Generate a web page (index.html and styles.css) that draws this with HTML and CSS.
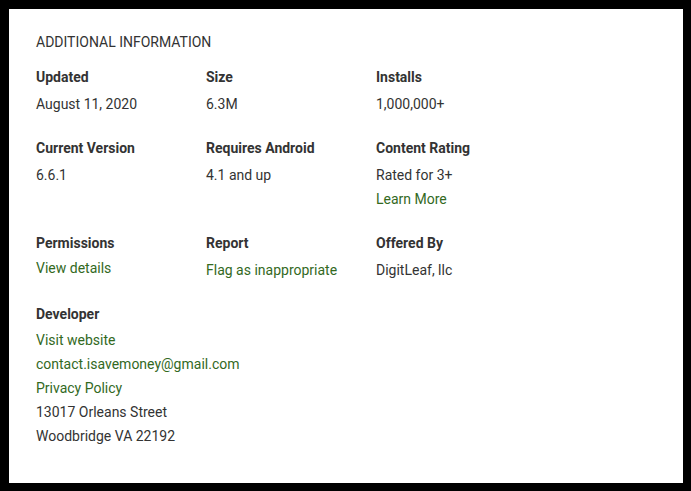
FILE: index.html
```html
<!DOCTYPE html>
<html lang="en">
<head>
  <meta charset="UTF-8">
  <meta name="viewport" content="width=device-width, initial-scale=1.0">
  <title>Additional Information</title>
  <link rel="stylesheet" href="styles.css">
</head>
<body>
  <div class="frame">
    <div class="info-card">
      <div class="info-title">ADDITIONAL INFORMATION</div>
      <div class="info-grid">
        <div class="info-item">
          <div class="info-label">Updated</div>
          <div class="info-value">August 11, 2020</div>
        </div>
        <div class="info-item">
          <div class="info-label">Size</div>
          <div class="info-value">6.3M</div>
        </div>
        <div class="info-item">
          <div class="info-label">Installs</div>
          <div class="info-value">1,000,000+</div>
        </div>

        <div class="info-item">
          <div class="info-label">Current Version</div>
          <div class="info-value">6.6.1</div>
        </div>
        <div class="info-item">
          <div class="info-label">Requires Android</div>
          <div class="info-value">4.1 and up</div>
        </div>
        <div class="info-item">
          <div class="info-label">Content Rating</div>
          <div class="info-value">Rated for 3+</div>
          <div><a class="info-link" href="#">Learn More</a></div>
        </div>

        <div class="info-item">
          <div class="info-label">Permissions</div>
          <div class="info-value tight"><a class="info-link" href="#">View details</a></div>
        </div>
        <div class="info-item">
          <div class="info-label">Report</div>
          <div class="info-value"><a class="info-link" href="#">Flag as inappropriate</a></div>
        </div>
        <div class="info-item">
          <div class="info-label">Offered By</div>
          <div class="info-value">DigitLeaf, llc</div>
        </div>

        <div class="info-item wide">
          <div class="info-label">Developer</div>
          <div class="dev-lines">
            <a class="info-link" href="#">Visit website</a>
            <a class="info-link" href="#">contact.isavemoney@gmail.com</a>
            <a class="info-link" href="#">Privacy Policy</a>
            <span>13017 Orleans Street</span>
            <span>Woodbridge VA 22192</span>
          </div>
        </div>
      </div>
    </div>
  </div>
</body>
</html>
```

FILE: styles.css
```css
body { margin: 0; padding: 0; background: #000; font-family: Roboto, Arial, sans-serif; font-size: 14px; line-height: 24px; color: #333; }
.frame { padding: 9px 8px 8px 9px; height: 491px; box-sizing: border-box; }
.info-card { background: #fff; height: 100%; box-sizing: border-box; padding: 21px 27px 0 27px; }
.info-title { font-size: 14px; color: #333; margin-bottom: 11px; }
.info-grid { display: grid; grid-template-columns: repeat(3, 170px); row-gap: 20px; }
.info-label { font-weight: 700; color: #333; }
.info-value { margin-top: 3px; }
.info-value.tight { margin-top: 1px; }
.info-item.wide { grid-column: span 3; }
.info-link { color: #33691e; text-decoration: none; }
.dev-lines { display: flex; flex-direction: column; margin-top: 2px; }
```
